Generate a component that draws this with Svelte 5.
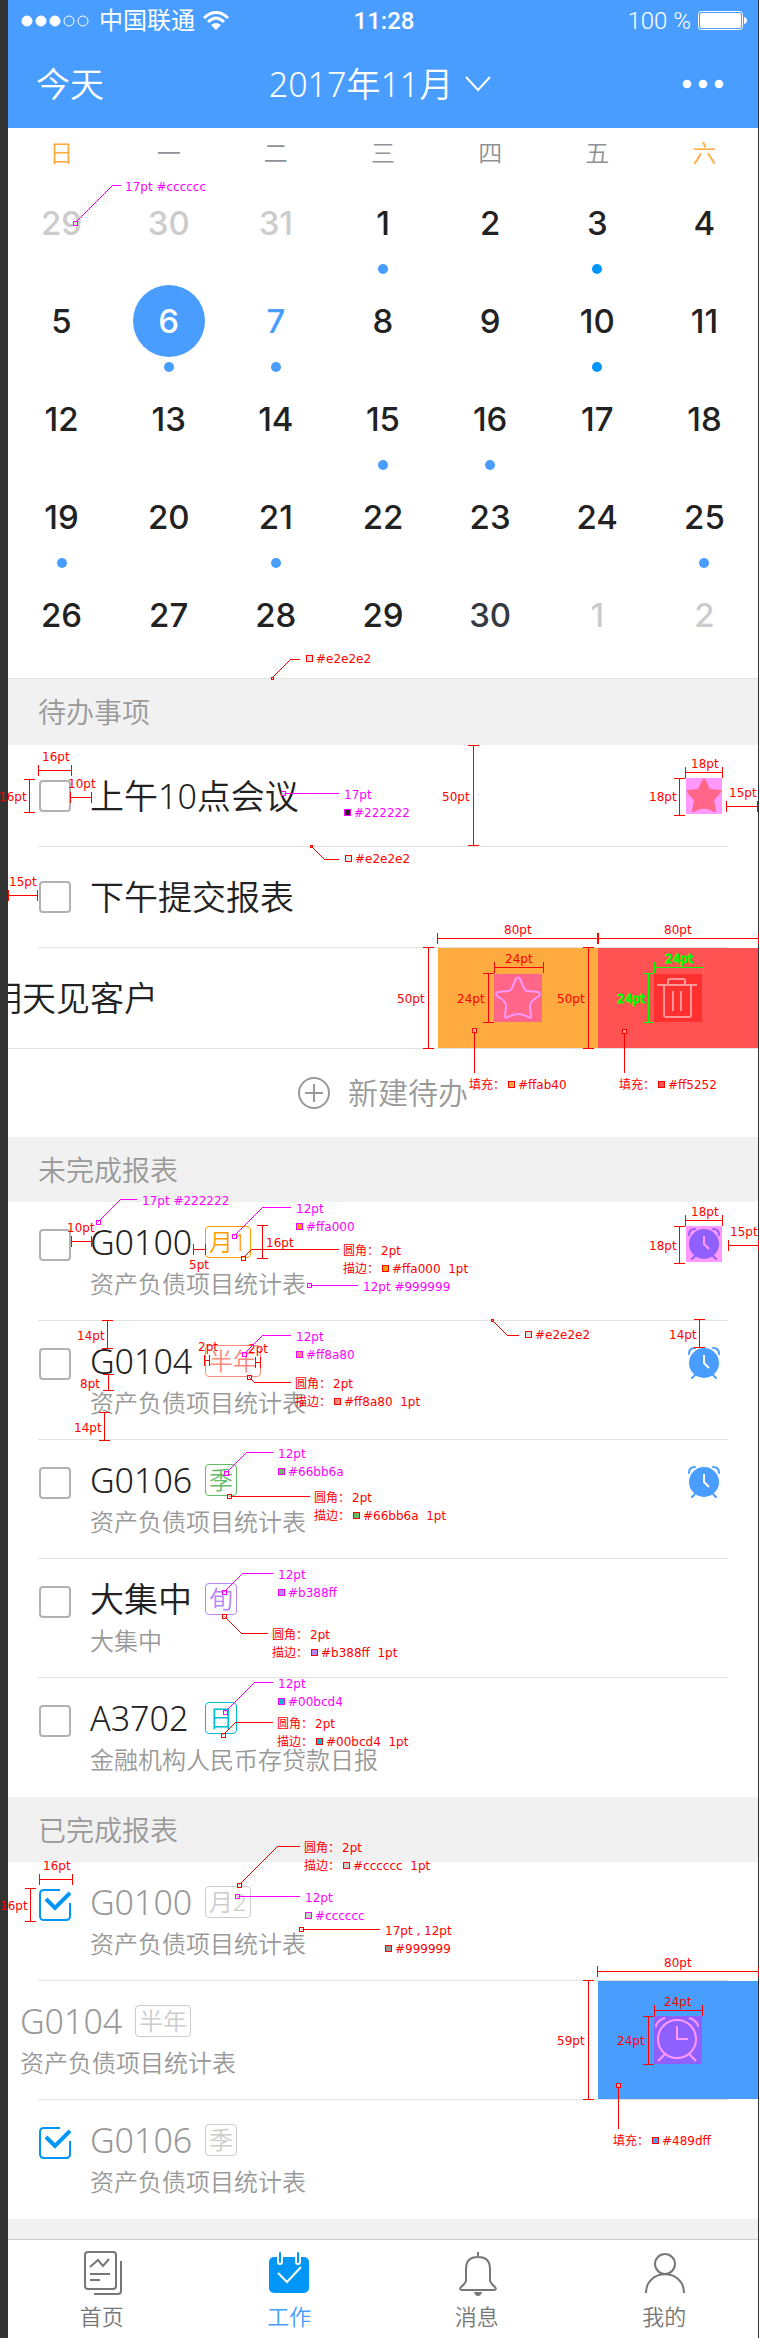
<script>
  const weekdays = ['日', '一', '二', '三', '四', '五', '六'];
  const marked = [1, 3, 6, 7, 10, 15, 16, 19, 21, 25];
  const deepMarked = [3, 10];
  const days = [
    ...[29, 30, 31].map((n) => ({ n, other: true })),
    ...Array.from({ length: 30 }, (_, i) => ({ n: i + 1, other: false })),
    ...[1, 2].map((n) => ({ n, other: true }))
  ];

  const pending = [
    { code: 'G0100', tag: '月1', color: '#ffa000', name: '资产负债项目统计表', alarm: true, hot: true },
    { code: 'G0104', tag: '半年', color: '#ff8a80', name: '资产负债项目统计表', alarm: true },
    { code: 'G0106', tag: '季', color: '#66bb6a', name: '资产负债项目统计表', alarm: true },
    { code: '大集中', tag: '旬', color: '#b388ff', name: '大集中' },
    { code: 'A3702', tag: '日', color: '#00bcd4', name: '金融机构人民币存贷款日报' }
  ];
  const done = [
    { code: 'G0100', tag: '月2' },
    { code: 'G0104', tag: '半年', swiped: true },
    { code: 'G0106', tag: '季' }
  ];

  const RED = '#ff0000';
  const PINK = '#ff00ff';
  const GREEN = '#00ff00';

  // h: [x1, x2, y, label, labelX, baseline, colour]
  // v: [x, y1, y2, label, labelX, baseline, colour]
  // lead: [points, colour, marker size]; the marker sits on the first point
  // text: [x, baseline, string, colour]; chip: [x, y, fill, colour]
  const strokeNote = (x, b, hex) => ({
    text: [[x, b, '圆角：', RED], [x + 38, b, '2pt', RED], [x, b + 18, '描边：', RED], [x + 49, b + 18, hex + '  1pt', RED]],
    chip: [[x + 39, b + 10, hex, RED]]
  });
  const fontNote = (x, b, size, hex, color = PINK) => ({
    text: [[x, b, size, color], [x + 10, b + 18, hex, color]],
    chip: [[x, b + 10, hex, color]]
  });
  const fillNote = (x, b, hex) => ({
    text: [[x, b, '填充：', RED], [x + 49, b, hex, RED]],
    chip: [[x + 39, b - 8, hex, RED]]
  });
  const lineNote = (x, b) => ({
    text: [[x + 10, b, '#e2e2e2', RED]],
    chip: [[x, b - 8, '#e2e2e2', RED]]
  });
  const layer = (side, h, v, lead, notes, text) => ({
    side, h, v, lead,
    text: [...text, ...notes.flatMap((n) => n.text)],
    chip: notes.flatMap((n) => n.chip)
  });

  const layers = [
    layer(
      'left',
      [
        [38, 71, 770, '16pt', 42, 761],
        [70, 91, 797, '10pt', 68, 788],
        [8, 37, 895, '15pt', 9, 886],
        [71, 91, 1241, '10pt', 67, 1232],
        [193, 205, 1249, '5pt', 189, 1269],
        [204, 209, 1360, '2pt', 198, 1351],
        [255, 260, 1362, '2pt', 248, 1353],
        [39, 72, 1879, '16pt', 43, 1870]
      ],
      [
        [29, 779, 812, '16pt', -1, 801],
        [473, 745, 845, '50pt', 442, 801],
        [262, 1225, 1258, '16pt', 266, 1247],
        [107, 1320, 1348, '14pt', 77, 1340],
        [108, 1374, 1390, '8pt', 80, 1388],
        [104, 1412, 1440, '14pt', 74, 1432],
        [30, 1888, 1921, '16pt', 0, 1910]
      ],
      [
        ['75,223 113,185 121,185', PINK, 4],
        ['272,678 291,659 300,659', RED, 2],
        ['283,793 339,793', PINK, 4],
        ['311,846 324,859 339,859', RED, 2],
        ['98,1222 121,1199 137,1199', PINK, 4],
        ['234,1236 263,1207 291,1207', PINK, 4],
        ['243,1258 252,1249 339,1249', RED, 4],
        ['309,1285 358,1285', PINK, 4],
        ['244,1354 263,1335 291,1335', PINK, 4],
        ['249,1377 254,1382 291,1382', RED, 4],
        ['226,1473 247,1452 273,1452', PINK, 4],
        ['229,1496 310,1496', RED, 4],
        ['224,1592 243,1573 273,1573', PINK, 4],
        ['224,1616 241,1633 268,1633', RED, 4],
        ['225,1712 255,1682 273,1682', PINK, 4],
        ['223,1735 236,1722 273,1722', RED, 4],
        ['239,1885 278,1846 300,1846', RED, 4],
        ['237,1896 300,1896', PINK, 4],
        ['301,1929 380,1929', RED, 4]
      ],
      [
        lineNote(306, 663),
        fontNote(344, 799, '17pt', '#222222'),
        lineNote(345, 863),
        fontNote(296, 1213, '12pt', '#ffa000'),
        strokeNote(343, 1255, '#ffa000'),
        fontNote(296, 1341, '12pt', '#ff8a80'),
        strokeNote(295, 1388, '#ff8a80'),
        fontNote(278, 1458, '12pt', '#66bb6a'),
        strokeNote(314, 1502, '#66bb6a'),
        fontNote(278, 1579, '12pt', '#b388ff'),
        strokeNote(272, 1639, '#b388ff'),
        fontNote(278, 1688, '12pt', '#00bcd4'),
        strokeNote(277, 1728, '#00bcd4'),
        strokeNote(304, 1852, '#cccccc'),
        fontNote(305, 1902, '12pt', '#cccccc'),
        fontNote(385, 1935, '17pt , 12pt', '#999999', RED)
      ],
      [
        [125, 191, '17pt #cccccc', PINK],
        [142, 1205, '17pt #222222', PINK],
        [363, 1291, '12pt #999999', PINK]
      ]
    ),
    layer(
      'right',
      [
        [685, 722, 772, '18pt', 691, 768],
        [726, 757, 806, '15pt', 729, 797],
        [437, 597, 938, '80pt', 504, 934],
        [598, 758, 938, '80pt', 664, 934],
        [494, 543, 967, '24pt', 505, 963],
        [654, 703, 967, '24pt', 665, 963, GREEN],
        [685, 722, 1220, '18pt', 691, 1216],
        [728, 758, 1245, '15pt', 730, 1236],
        [597, 758, 1971, '80pt', 664, 1967],
        [654, 702, 2010, '24pt', 664, 2006]
      ],
      [
        [679, 778, 815, '18pt', 649, 801],
        [428, 947, 1048, '50pt', 397, 1003],
        [588, 947, 1048, '50pt', 557, 1003],
        [488, 973, 1022, '24pt', 457, 1003],
        [648, 973, 1022, '24pt', 617, 1003, GREEN],
        [679, 1226, 1263, '18pt', 649, 1250],
        [699, 1319, 1347, '14pt', 669, 1339],
        [588, 1980, 2099, '59pt', 557, 2045],
        [648, 2016, 2064, '24pt', 617, 2045]
      ],
      [
        ['474,1030 474,1073', RED, 4],
        ['624,1031 624,1073', RED, 4],
        ['492,1320 507,1335 519,1335', RED, 2],
        ['618,2085 618,2129', RED, 4]
      ],
      [fillNote(469, 1089, '#ffab40'), fillNote(619, 1089, '#ff5252'), lineNote(525, 1339), fillNote(613, 2145, '#489dff')],
      []
    )
  ];
</script>

{#snippet box(name, checked)}
  <span class="box">
    <input type="checkbox" aria-label={name} {checked} />
    <svg viewBox="0 0 32 32" aria-hidden="true">
      <path d="M21 1H5Q1 1 1 5V27Q1 31 5 31H27Q31 31 31 27V14" stroke-width="2" />
      <path d="M7 10L16 19L31 4" stroke-width="4" />
    </svg>
  </span>
{/snippet}

{#snippet alarm(hot)}
  <svg class="mark" class:hot viewBox="0 0 36 36" aria-hidden="true">
    <circle cx="18" cy="18" r="15" fill="currentColor" />
    <path d="M18 10V18L23 23" class="cut" />
    <path d="M3 9Q3 3 9 3M33 9Q33 3 27 3M9 30L6 33M27 30L30 33" stroke="currentColor" stroke-width="2" fill="none" stroke-linecap="round" />
  </svg>
{/snippet}

{#snippet summary(item)}
  <div class="summary">
    <div class="head">
      <span class="code">{item.code}</span>
      <span class="tag" style:color={item.color}>{item.tag}</span>
    </div>
    <div class="sub">{item.name ?? '资产负债项目统计表'}</div>
  </div>
{/snippet}

<div class="page">
  <main>
    <header>
      <div class="status">
        <div class="carrier">
          <svg width="70" height="14" viewBox="0 0 70 14" aria-hidden="true">
            {#each [0, 1, 2, 3, 4] as i}
              <circle cx={6 + i * 14} cy="7" r="5" fill={i < 3 ? '#fff' : 'none'} stroke="#fff" />
            {/each}
          </svg>
          <span>中国联通</span>
          <svg width="26" height="20" viewBox="0 0 26 20" aria-hidden="true">
            <path d="M1 7Q13 -4 25 7M5 11Q13 3 21 11" fill="none" stroke="#fff" stroke-width="3" />
            <path d="M8 14Q13 10 18 14L13 19Z" fill="#fff" />
          </svg>
        </div>
        <span class="time">11:28</span>
        <div class="power">
          <span>100 %</span>
          <svg width="49" height="20" viewBox="0 0 49 20" aria-hidden="true">
            <rect x="0.5" y="0.5" width="44" height="18" rx="3" fill="none" stroke="#fff" />
            <rect x="2" y="2" width="41" height="15" rx="2" fill="#fff" />
            <path d="M46 6Q49 7 49 9.500Q49 12 46 13Z" fill="#fff" />
          </svg>
        </div>
      </div>
      <nav class="bar">
        <button class="today">今天</button>
        <button class="month">
          2017年11月
          <svg width="26" height="16" viewBox="0 0 26 16" aria-hidden="true">
            <path d="M1 1L13 14L25 1" fill="none" stroke="#fff" stroke-width="2" />
          </svg>
        </button>
        <button class="more" aria-label="更多">
          <svg width="42" height="10" viewBox="0 0 42 10" aria-hidden="true" fill="#fff">
            <circle cx="5" cy="5" r="4.300" /><circle cx="21" cy="5" r="4.300" /><circle cx="37" cy="5" r="4.300" />
          </svg>
        </button>
      </nav>
    </header>

    <section class="calendar">
      <div class="week">
        {#each weekdays as w, i}
          <span class:rest={i === 0 || i === 6}>{w}</span>
        {/each}
      </div>
      <div class="days">
        {#each days as d}
          <button class:other={d.other} class:selected={!d.other && d.n === 6} class:now={!d.other && d.n === 7} class:last={!d.other && d.n === 30}>
            <span class="num">{d.n}</span>
            {#if !d.other && marked.includes(d.n)}
              <i class:deep={deepMarked.includes(d.n)}></i>
            {/if}
          </button>
        {/each}
      </div>
    </section>

    <section>
      <h2 class="first">待办事项</h2>
      <ul class="todos">
        <li class="todo">
          <div class="line">
            {@render box('上午10点会议', false)}
            <span class="code">上午10点会议</span>
            <svg class="mark star" viewBox="0 0 36 36" aria-hidden="true">
              <path d="M18 0Q19 0 24 11L35 12Q37 13 28 22L30 33Q30 35 28 34Q18 27 8 34Q6 35 6 33L8 22Q-1 13 1 12L12 11Q17 0 18 0Z" />
            </svg>
          </div>
        </li>
        <li class="todo">
          <div class="line">
            {@render box('下午提交报表', false)}
            <span class="code">下午提交报表</span>
          </div>
        </li>
        <li class="todo slid">
          <span class="code">明天见客户</span>
          <div class="actions">
            <button class="orange" aria-label="标星">
              <svg viewBox="0 0 48 48">
                <path d="M22 5Q24 2 26 5L30 14Q31 17 34 17L44 18Q47 19 45 22Q36 27 36 32L37 42Q37 45 34 43Q24 37 14 43Q11 45 11 42L12 32Q12 27 3 22Q1 19 4 18L14 17Q17 17 18 14Z" />
              </svg>
            </button>
            <button class="red" aria-label="删除">
              <svg viewBox="0 0 48 48">
                <path d="M3 11H43M14 11V7Q14 5 16 5H29Q31 5 31 7V11M10 11V41Q10 43 12 43H35Q37 43 37 41V11M19 17V37M27 17V37" />
              </svg>
            </button>
          </div>
        </li>
      </ul>
      <button class="add">
        <svg width="32" height="32" viewBox="0 0 32 32" fill="none" stroke="#999" stroke-width="2" aria-hidden="true">
          <circle cx="16" cy="16" r="15" /><path d="M7 16H25M16 7V25" />
        </svg>
        新建待办
      </button>
    </section>

    <section>
      <h2>未完成报表</h2>
      <ul>
        {#each pending as item}
          <li class="report">
            <div class="line">
              {@render box(item.code, false)}
              {@render summary(item)}
              {#if item.alarm}{@render alarm(item.hot)}{/if}
            </div>
          </li>
        {/each}
      </ul>
    </section>

    <section class="done">
      <h2>已完成报表</h2>
      <ul>
        {#each done as item}
          <li class="report" class:slid={item.swiped}>
            <div class="line">
              {#if !item.swiped}{@render box(item.code, true)}{/if}
              {@render summary(item)}
            </div>
            {#if item.swiped}
              <div class="actions">
                <button class="blue" aria-label="提醒">
                  <svg viewBox="0 0 48 48">
                    <circle cx="23" cy="23" r="19" />
                    <path d="M23 10V23H34M2 11Q2 5 11 2M44 11Q44 5 35 2M11 38L4 45M35 38L42 45" />
                  </svg>
                </button>
              </div>
            {/if}
          </li>
        {/each}
      </ul>
    </section>

    <nav class="tabs">
      <a href="#home">
        <svg viewBox="0 0 44 46" aria-hidden="true">
          <rect x="5" y="2" width="31" height="37" rx="3" />
          <path d="M41 11V41Q41 44 38 44H14M10 17L18 10L23 16L29 9M10 24H30M10 30H20" />
        </svg>
        首页
      </a>
      <a href="#work" class="on" aria-current="page">
        <svg viewBox="0 0 44 46" aria-hidden="true">
          <rect x="2" y="7" width="40" height="36" rx="5" fill="#0096f8" stroke="none" />
          <path d="M13 2V12M31 2V12" stroke="#fff" stroke-width="6" stroke-linecap="round" />
          <path d="M13 3V12M31 3V12" stroke="#0096f8" stroke-width="2" stroke-linecap="round" />
          <path d="M11 23L20 32L34 17" stroke="#fff" />
        </svg>
        工作
      </a>
      <a href="#message">
        <svg viewBox="0 0 44 46" aria-hidden="true">
          <path d="M23 2V7M11 31V19Q11 7 23 7Q35 7 35 19V31Q36 34 40 37Q42 40 39 40H7Q4 40 6 37Q10 34 11 31Z" />
          <path d="M19 42H27Q26 46 23 46Q20 46 19 42Z" fill="#777" stroke="none" />
        </svg>
        消息
      </a>
      <a href="#me">
        <svg viewBox="0 0 44 46" aria-hidden="true">
          <circle cx="23" cy="14" r="10" />
          <path d="M4 43C4 18 42 18 42 43" />
        </svg>
        我的
      </a>
    </nav>
  </main>

  {#each layers as l}
    <svg class="notes {l.side}" width="759" height="2338" viewBox="0 0 759 2338">
      {#each l.h as [x1, x2, y, label, lx, ly, c = RED]}
        <path d="M{x1} {y}H{x2}M{x1} {y - 5}V{y + 6}M{x2} {y - 5}V{y + 6}" stroke={c} />
        <text x={lx} y={ly} fill={c} class:strong={c === GREEN}>{label}</text>
      {/each}
      {#each l.v as [x, y1, y2, label, lx, ly, c = RED]}
        <path d="M{x} {y1}V{y2}M{x - 5} {y1}H{x + 6}M{x - 5} {y2}H{x + 6}" stroke={c} />
        <text x={lx} y={ly} fill={c} class:strong={c === GREEN}>{label}</text>
      {/each}
      {#each l.lead as [points, c, size]}
        <polyline {points} stroke={c} />
        <rect x={+points.split(',')[0] - size / 2} y={+points.split(' ')[0].split(',')[1] - size / 2} width={size} height={size} stroke={c} fill="#fff" fill-opacity="0.500" />
      {/each}
      {#each l.chip as [x, y, fill, c]}
        <rect {x} {y} width="7" height="7" fill={c} />
        <rect x={x + 1} y={y + 1} width="5" height="5" {fill} />
      {/each}
      {#each l.text as [x, y, t, c]}
        <text {x} {y} fill={c}>{t}</text>
      {/each}
    </svg>
  {/each}
</div>

<style>
  :global(body) { margin: 0; background: #333; }
  .page {
    position: relative;
    overflow: hidden;
    padding: 0 1px 0 8px;
    background: #333;
    color: #222;
    font-family: "Noto Sans", "Noto Sans CJK SC", sans-serif;
    font-weight: 350;
  }
  main { background: #fff; }
  button { border: 0; padding: 0; background: none; color: inherit; font: inherit; cursor: pointer; }
  svg { display: block; flex: none; }
  ul { list-style: none; margin: 0; padding: 0; }

  header { background: #489dff; color: #fff; }
  .status {
    display: grid;
    grid-template-columns: 1fr auto 1fr;
    align-items: center;
    height: 40px;
    padding: 0 11px 0 13px;
    font-family: Roboto, "Noto Sans CJK SC", sans-serif;
    font-size: 24px;
    line-height: 42px;
  }
  .carrier, .power { display: flex; align-items: center; gap: 7px; }
  .carrier { gap: 8px; font-weight: 400; }
  .power { justify-content: flex-end; }
  .time { font-weight: 500; }
  .bar {
    display: grid;
    grid-template-columns: 1fr auto 1fr;
    align-items: center;
    height: 88px;
    padding: 0 34px 0 28px;
    font-size: 34px;
    line-height: 40px;
  }
  .today { justify-self: start; }
  .more { justify-self: end; }
  .month { display: flex; align-items: center; gap: 12px; }

  .calendar { padding-bottom: 12px; }
  .week, .days { display: grid; grid-template-columns: repeat(7, 1fr); }
  .week { height: 48px; line-height: 50px; text-align: center; font-size: 24px; color: #8e9196; }
  .week .rest { color: #ffab40; }
  .days { font-family: Inter, sans-serif; font-size: 33px; font-weight: 500; }
  .days button { display: flex; flex-direction: column; align-items: center; gap: 5px; height: 98px; padding-top: 11px; }
  .num { width: 72px; line-height: 72px; border-radius: 50%; }
  .days .other { color: #ccc; }
  .days .selected .num { background: #489dff; color: #fff; }
  .days .now { color: #489dff; }
  .days .last { color: #343a40; }
  .days i { width: 10px; height: 10px; border-radius: 50%; background: #489dff; }
  .days i.deep { background: #0096f8; }

  h2 { margin: 0; padding: 1px 30px 0; background: #f1f1f1; color: #999; font-size: 28px; font-weight: 350; line-height: 64px; }
  h2.first { border-top: 1px solid #e2e2e2; line-height: 65px; }

  .line { display: flex; flex: 1; margin: 0 30px; border-bottom: 1px solid #e2e2e2; padding: 0 6px 0 1px; gap: 19px; }
  .code { font-size: 34px; line-height: 40px; white-space: nowrap; }
  .todos { padding-top: 1px; }
  .todo { display: flex; height: 101px; }
  .todo .line { align-items: center; }
  .todo.slid { align-items: center; overflow: hidden; box-sizing: border-box; border-bottom: 1px solid #e2e2e2; }
  .todo.slid .code { margin-left: -20px; }

  .box { position: relative; flex: none; width: 32px; height: 32px; }
  .box input { appearance: none; display: block; box-sizing: border-box; width: 32px; height: 32px; margin: 0; border: 2px solid #b2b2b2; border-radius: 4px; background: #fff; }
  .box svg { position: absolute; inset: 0; width: 32px; height: 32px; fill: none; stroke: #0096f8; pointer-events: none; visibility: hidden; }
  .box input:checked { border-color: transparent; }
  .box input:checked + svg { visibility: visible; }

  .mark { width: 36px; height: 36px; margin-left: auto; color: #489dff; }
  .mark .cut { fill: none; stroke: #fff; stroke-width: 2; }
  .mark.hot { background: #ff99ff; color: #9060ff; }
  .mark.hot .cut { stroke: #ff99ff; }
  .mark.star { background: #ff99ff; fill: #ff6688; }

  .actions { display: flex; align-self: stretch; margin-left: auto; }
  .actions button { display: grid; place-items: center; width: 160px; }
  .actions svg { width: 48px; height: 48px; fill: none; stroke-width: 2; }
  .orange { background: #ffab40; }
  .orange svg { background: #ff6688; stroke: #ff99ff; }
  .red { background: #ff5252; }
  .red svg { background: #ff3030; stroke: #ff9999; }
  .blue { background: #489dff; }
  .blue svg { background: #9060ff; stroke: #ff99ff; }

  .add { display: flex; align-items: center; justify-content: center; gap: 18px; width: 100%; height: 88px; color: #999; font-size: 30px; line-height: 32px; }

  .report { display: flex; position: relative; }
  .report .line { padding-top: 24px; padding-bottom: 22px; }
  .report:last-child .line { border-color: transparent; }
  .report .box { margin-top: 3px; }
  .head { display: flex; align-items: center; gap: 12px; height: 32px; }
  .head .code { min-width: 103px; }
  .tag { box-sizing: border-box; height: 32px; padding: 0 3px; border: 1px solid currentColor; border-radius: 4px; font-size: 24px; line-height: 30px; }
  .sub { margin-top: 12px; color: #999; font-size: 24px; line-height: 28px; white-space: nowrap; }
  .report.slid .line { padding-left: 0; }
  .report.slid .summary { margin-left: -18px; }
  .report .actions { position: absolute; top: 0; right: 0; bottom: 1px; }
  .done { color: #999; }
  .done .tag { color: #ccc; }
  .done { border-bottom: 20px solid #f1f1f1; }

  .tabs { display: grid; grid-template-columns: repeat(4, 1fr); border-top: 1px solid #ccc; }
  .tabs a { display: flex; flex-direction: column; align-items: center; gap: 4px; height: 88px; padding-top: 10px; color: #777; font-size: 22px; line-height: 32px; text-decoration: none; }
  .tabs svg { width: 44px; height: 46px; fill: none; stroke: #777; stroke-width: 2; }
  .tabs .on { color: #489dff; }

  .notes { position: absolute; top: 0; pointer-events: none; fill: none; shape-rendering: crispEdges; font: 12px "DejaVu Sans", "Noto Sans CJK SC", sans-serif; }
  .notes.left { left: 0; }
  .notes.right { right: 0; }
  .notes text { white-space: pre; }
  .notes .strong { stroke: #00ff00; }
</style>
